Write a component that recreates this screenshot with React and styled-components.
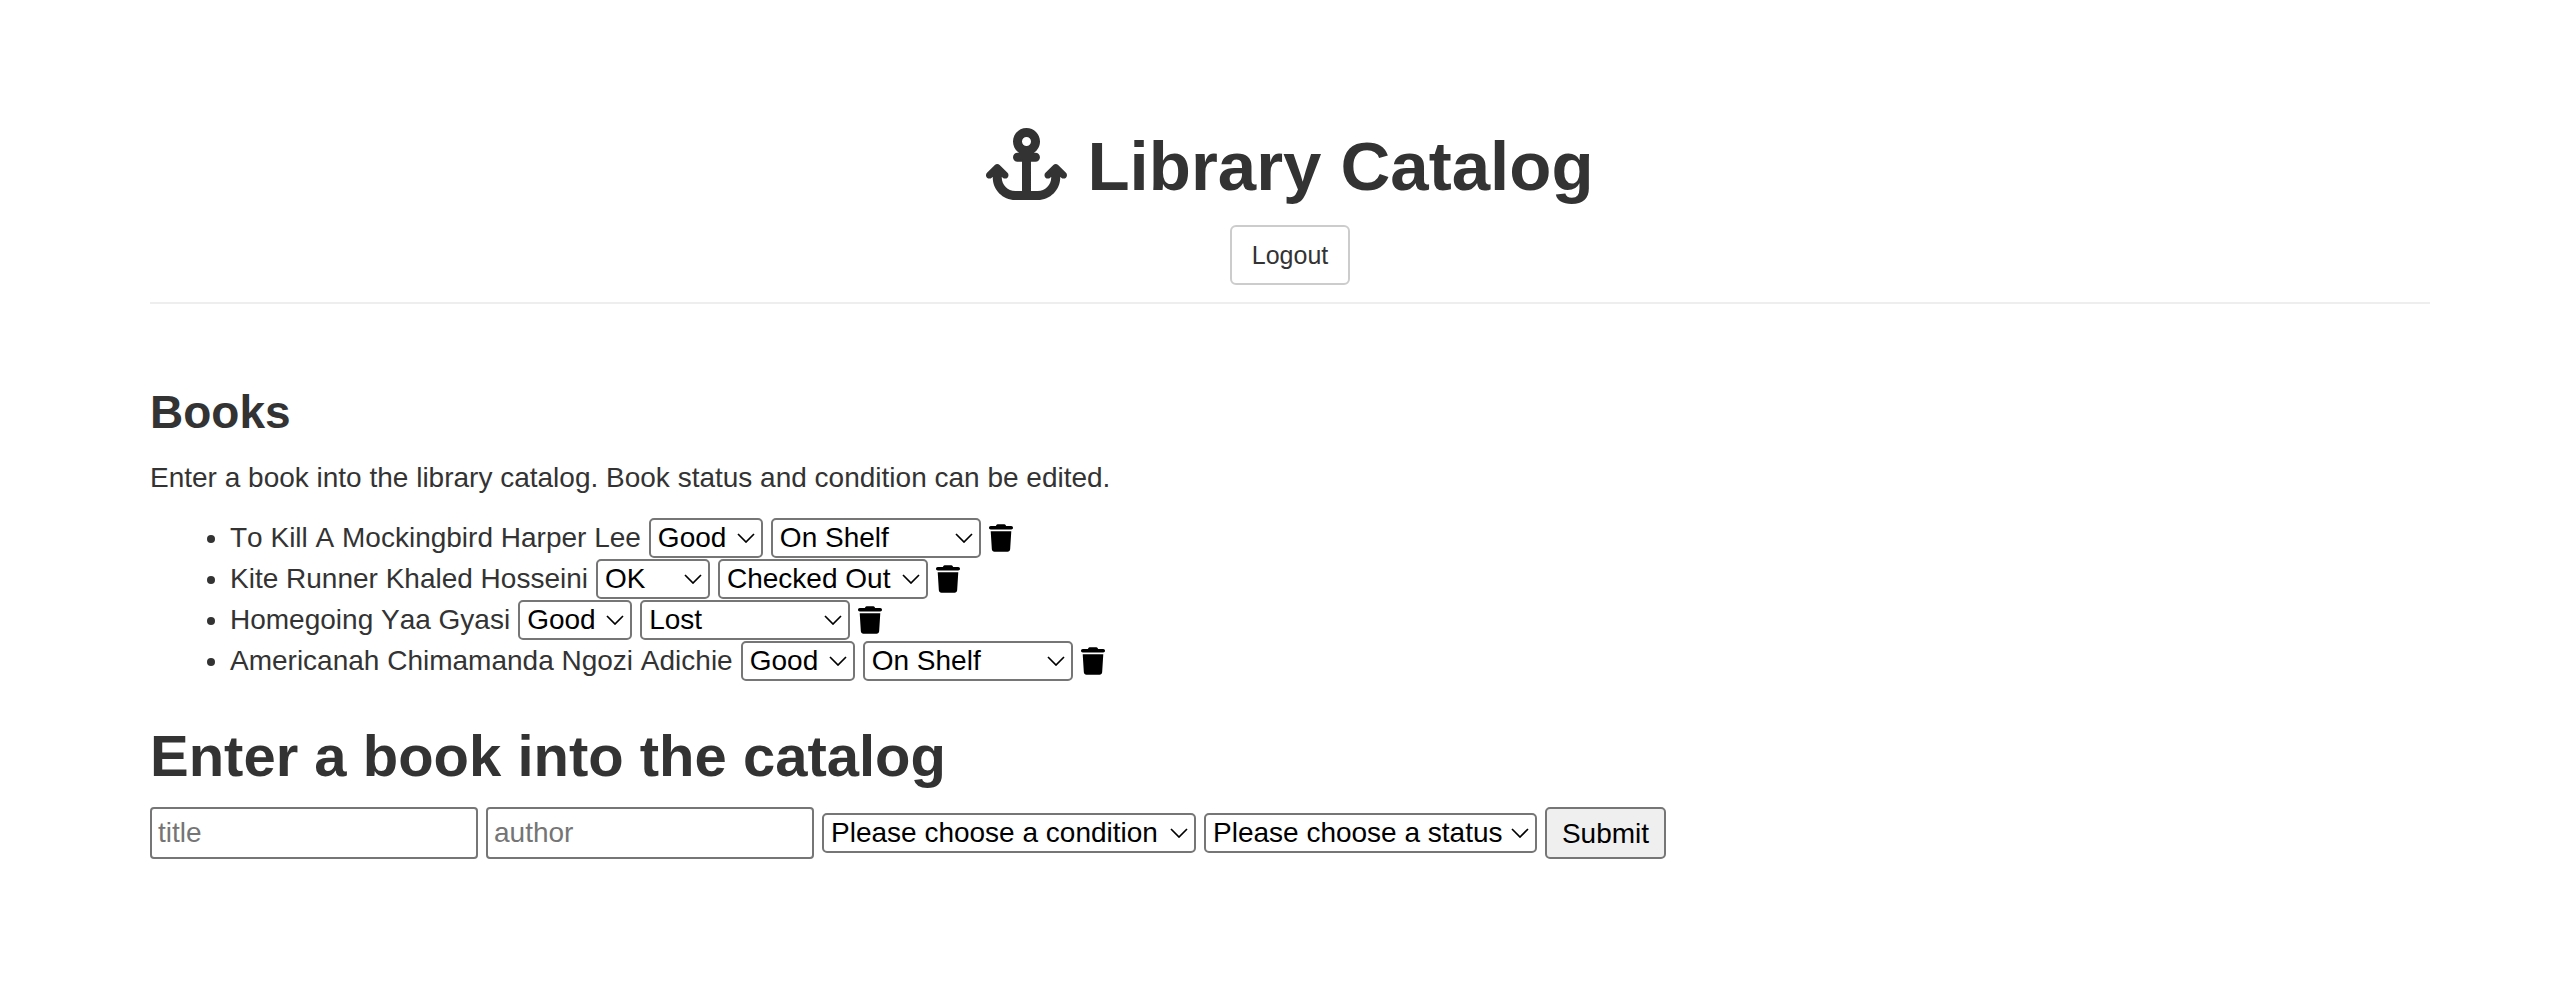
import React from "react";
import styled, { createGlobalStyle } from "styled-components";
import { FaAnchor, FaTrash } from "react-icons/fa6";

const GlobalStyle = createGlobalStyle`
  * { box-sizing: border-box; }
  body {
    margin: 0;
    background: #fff;
    color: #333;
    font: 28px/41px "Liberation Sans", Arial, sans-serif;
    font-kerning: none;
  }
`;

const Page = styled.main`
  padding: 125px 146px 80px 150px;
`;

const Header = styled.header`
  display: flex;
  flex-direction: column;
  align-items: center;
  gap: 16px;
  padding-bottom: 17px;
  border-bottom: 2px solid #eee;
`;

const Title = styled.h1`
  display: flex;
  align-items: center;
  gap: 20px;
  margin: 0;
  font-size: 69px;
  line-height: 84px;
  font-weight: 700;
`;

const AnchorIcon = styled(FaAnchor)`
  width: 81px;
  height: 72px;
  margin-bottom: 6px;
`;

const Heading = styled.h2`
  margin: 0;
  font-size: ${(p) => (p.$large ? 58 : 46)}px;
  line-height: ${(p) => (p.$large ? 66 : 54)}px;
  font-weight: 700;
`;

const LogoutButton = styled.button`
  height: 60px;
  padding: 0 20px;
  border: 2px solid #ccc;
  border-radius: 6px;
  background: #fff;
  color: #333;
  font: inherit;
  font-size: 25px;
`;

const Section = styled.section`
  margin-top: ${(p) => p.$space}px;
`;

const Intro = styled.p`
  margin: 18px 0 19px;
`;

const BookList = styled.ul`
  margin: 0;
  padding-left: 80px;
`;

const Line = styled.div`
  display: flex;
  flex-wrap: wrap;
  align-items: center;
  gap: 8px;
`;

const BookForm = styled.form`
  margin-top: 18px;
`;

const SelectBox = styled.span`
  display: inline-grid;
  align-items: center;
  width: ${(p) => p.$width}px;

  > * { grid-area: 1 / 1; }
`;

const Select = styled.select`
  appearance: none;
  width: 100%;
  height: 40px;
  padding: 0 7px;
  border: 2px solid #767676;
  border-radius: 5px;
  background: #fff;
  color: #000;
  font: inherit;
  line-height: 32px;
`;

const Chevron = styled.svg`
  justify-self: end;
  width: 18px;
  height: 10px;
  margin-right: 8px;
  fill: none;
  stroke: #000;
  stroke-width: 1.7;
  pointer-events: none;
`;

const DeleteButton = styled.button`
  display: flex;
  padding: 0;
  border: 0;
  background: none;
  color: #000;
`;

const TrashIcon = styled(FaTrash)`
  width: 24px;
  height: 28px;
`;

const Input = styled.input`
  width: 328px;
  height: 52px;
  padding: 0 6px;
  border: 2px solid #767676;
  border-radius: 4px;
  background: #fff;
  color: #000;
  font: inherit;

  &::placeholder { color: #757575; opacity: 1; }
`;

const SubmitButton = styled.button`
  width: 121px;
  height: 52px;
  padding: 0;
  border: 2px solid #767676;
  border-radius: 5px;
  background: #efefef;
  color: #000;
  font: inherit;
`;

const CONDITIONS = ["Good", "OK", "Bad"];
const STATUSES = ["On Shelf", "Checked Out", "Lost"];

const BOOKS = [
  { title: "To Kill A Mockingbird", author: "Harper Lee", condition: "Good", status: "On Shelf" },
  { title: "Kite Runner", author: "Khaled Hosseini", condition: "OK", status: "Checked Out" },
  { title: "Homegoing", author: "Yaa Gyasi", condition: "Good", status: "Lost" },
  { title: "Americanah", author: "Chimamanda Ngozi Adichie", condition: "Good", status: "On Shelf" },
];

function Dropdown({ label, width, options, value }) {
  return (
    <SelectBox $width={width}>
      <Select aria-label={label} defaultValue={value}>
        {options.map((o) => (
          <option key={o}>{o}</option>
        ))}
      </Select>
      <Chevron viewBox="0 0 18 10" aria-hidden="true">
        <path d="M1 1l8 8 8-8" />
      </Chevron>
    </SelectBox>
  );
}

function Book({ title, author, condition, status }) {
  return (
    <li>
      <Line>
        <span>{title} {author}</span>
        <Dropdown label={`Condition of ${title}`} width={114} options={CONDITIONS} value={condition} />
        <Dropdown label={`Status of ${title}`} width={210} options={STATUSES} value={status} />
        <DeleteButton type="button" aria-label={`Delete ${title}`}>
          <TrashIcon />
        </DeleteButton>
      </Line>
    </li>
  );
}

export default function App() {
  return (
    <Page>
      <GlobalStyle />
      <Header>
        <Title><AnchorIcon />Library Catalog</Title>
        <LogoutButton type="button">Logout</LogoutButton>
      </Header>
      <Section $space={81}>
        <Heading>Books</Heading>
        <Intro>Enter a book into the library catalog. Book status and condition can be edited.</Intro>
        <BookList>
          {BOOKS.map((b) => (
            <Book key={b.title} {...b} />
          ))}
        </BookList>
      </Section>
      <Section $space={42}>
        <Heading $large>Enter a book into the catalog</Heading>
        <BookForm onSubmit={(e) => e.preventDefault()}>
          <Line>
            <Input aria-label="Title" placeholder="title" />
            <Input aria-label="Author" placeholder="author" />
            <Dropdown label="Condition" width={374} options={["Please choose a condition", ...CONDITIONS]} />
            <Dropdown label="Status" width={333} options={["Please choose a status", ...STATUSES]} />
            <SubmitButton>Submit</SubmitButton>
          </Line>
        </BookForm>
      </Section>
    </Page>
  );
}
